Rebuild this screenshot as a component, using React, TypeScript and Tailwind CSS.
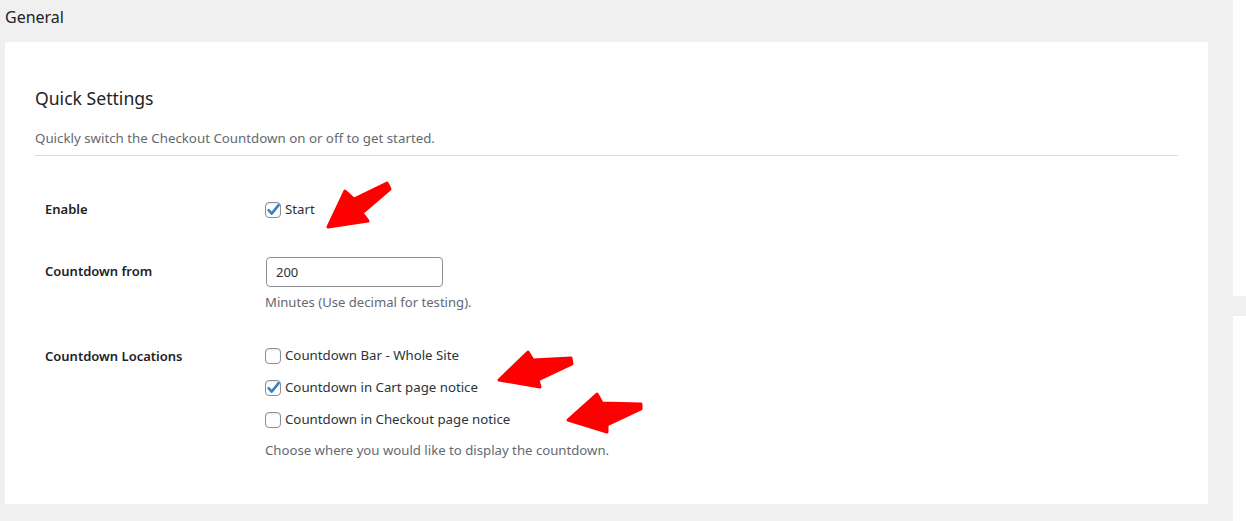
import React from 'react'

function Checkbox({ checked }: { checked?: boolean }) {
  return (
    <span className="relative inline-block w-4 h-4 shrink-0 rounded-[4px] border border-[#8c8f94] bg-white shadow-[inset_0_1px_2px_rgba(0,0,0,0.1)]">
      {checked && (
        <svg className="absolute -left-px -top-px overflow-visible" width="16" height="16" viewBox="0 0 16 16">
          <path d="M3.6 8.2 L6.7 11.6 L13.6 3.2" fill="none" stroke="#3582c4" strokeWidth="2.6" strokeLinecap="round" strokeLinejoin="round" />
        </svg>
      )}
    </span>
  )
}

function CheckRow({ label, checked }: { label: string; checked?: boolean }) {
  return (
    <label className="flex items-center gap-1 h-5 text-[13.25px] text-[#2c3338]">
      <Checkbox checked={checked} />
      <span>{label}</span>
    </label>
  )
}

function Arrows() {
  return (
    <svg className="absolute left-0 top-0 pointer-events-none" width="1246" height="521">
      <g fill="#ff0000" stroke="#ff0000" strokeWidth="3" strokeLinejoin="round">
        <polygon points="328,227 345,191 354,199 387,183 390,189 362,213 368,221" />
        <polygon points="499,380 528,352 533,360 571,358 572,364 538,380 540,387" />
        <polygon points="568,420 597,394 602,403 641,404 641,409 607,425 607,432" />
      </g>
    </svg>
  )
}

export default function App() {
  return (
    <div className="relative w-[1246px] h-[521px] overflow-hidden flex bg-white font-['Noto_Sans',sans-serif]">
      <div className="w-[1233px] bg-[#f0f0f1] flex flex-col">
        <div className="h-[42px] pl-[5px] flex items-center text-[16px] text-[#1d2327] pb-[8px]">
          General
        </div>
        <div className="ml-[5px] w-[1203px] h-[462px] bg-white px-[30px] pt-[44px]">
          <h2 className="text-[17.6px] leading-6 text-[#1d2327]">Quick Settings</h2>
          <p className="mt-[18px] text-[13.3px] leading-5 text-[#646970]">
            Quickly switch the Checkout Countdown on or off to get started.
          </p>
          <div className="mt-[7px] border-t border-[#dcdcde]" />

          <div className="pl-[10px]">
            <div className="mt-[44px] flex items-center h-5">
              <div className="w-[220px] text-[13px] font-semibold text-[#1d2327]">Enable</div>
              <CheckRow label="Start" checked />
            </div>

            <div className="mt-[37px] flex">
              <div className="w-[220px] h-[30px] flex items-center text-[13px] font-semibold text-[#1d2327]">
                Countdown from
              </div>
              <div>
                <input
                  type="text"
                  defaultValue="200"
                  className="ml-px w-[177px] h-[30px] px-[9px] rounded-[4px] border border-[#8c8f94] text-[13px] text-[#2c3338] outline-none"
                />
                <p className="mt-[5px] text-[13.1px] leading-5 text-[#646970]">Minutes (Use decimal for testing).</p>
              </div>
            </div>

            <div className="mt-[35px] flex">
              <div className="w-[220px] h-5 flex items-center text-[13px] font-semibold text-[#1d2327]">
                Countdown Locations
              </div>
              <div className="flex flex-col gap-3 -mt-px">
                <CheckRow label="Countdown Bar - Whole Site" />
                <CheckRow label="Countdown in Cart page notice" checked />
                <CheckRow label="Countdown in Checkout page notice" />
                <p className="-mt-[2px] text-[13.2px] leading-5 text-[#646970]">
                  Choose where you would like to display the countdown.
                </p>
              </div>
            </div>
          </div>
        </div>
      </div>
      <div className="flex-1 pt-[296px]">
        <div className="h-5 bg-[#f0f0f1]" />
      </div>
      <Arrows />
    </div>
  )
}
